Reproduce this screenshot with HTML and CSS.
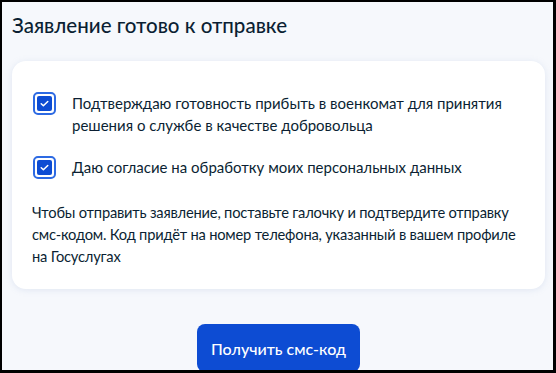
FILE: index.html
```html
<!DOCTYPE html>
<html lang="ru">
<head>
    <meta charset="UTF-8">
    <meta name="viewport" content="width=device-width, initial-scale=1.0">
    <title>Заявление готово к отправке</title>
    <link rel="stylesheet" href="styles.css">
</head>
<body>
    <div class="frame">
        <h2 class="title">Заявление готово к отправке</h2>
        <div class="card">
            <label class="check-row">
                <span class="check-box">
                    <svg viewBox="0 0 16 16" width="16" height="16"><path d="M4.5 8.2l2.3 2.2 4.7-4.6" fill="none" stroke="#fff" stroke-width="1.6" stroke-linecap="round" stroke-linejoin="round"/></svg>
                </span>
                <span class="check-text">Подтверждаю готовность прибыть в военкомат для принятия решения о службе в качестве добровольца</span>
            </label>
            <label class="check-row">
                <span class="check-box">
                    <svg viewBox="0 0 16 16" width="16" height="16"><path d="M4.5 8.2l2.3 2.2 4.7-4.6" fill="none" stroke="#fff" stroke-width="1.6" stroke-linecap="round" stroke-linejoin="round"/></svg>
                </span>
                <span class="check-text">Даю согласие на обработку моих персональных данных</span>
            </label>
            <p class="note">Чтобы отправить заявление, поставьте галочку и подтвердите отправку<br>смс-кодом. Код придёт на номер телефона, указанный в вашем профиле<br>на Госуслугах</p>
        </div>
        <div class="actions">
            <button class="btn-primary">Получить смс-код</button>
        </div>
    </div>
</body>
</html>
```

FILE: styles.css
```css
html, body { margin: 0; padding: 0; }
body { font-family: "Lato", "Open Sans", sans-serif; color: #0b1f33; background: #000; }
.frame { box-sizing: border-box; width: 556px; height: 373px; overflow: hidden; border-style: solid; border-color: #000; border-width: 2px 3px 3px 2px; background: #f6f8fc; padding: 0 8px 0 10px; }
.title { margin: 0; padding-top: 10px; height: 59px; box-sizing: border-box; font-size: 20.5px; line-height: 26px; font-weight: 500; color: #0b1f33; }
.card { background: #fff; border-radius: 14px; padding: 31px 20px 22px 20px; box-shadow: 0 1px 6px rgba(160, 180, 215, 0.25); }
.check-row { display: flex; align-items: flex-start; gap: 16px; margin-bottom: 20px; }
.check-box { flex: none; box-sizing: border-box; width: 23px; height: 23px; margin: 0 0 0 1px; border: 2px solid #2d6ae3; border-radius: 5px; padding: 2px; display: flex; }
.check-box svg { width: 15px; height: 15px; background: #0d4cd3; border-radius: 2px; }
.check-text { font-size: 15px; line-height: 22px; color: #0b1f33; }
.note { margin: 22px -14px 0 0; font-size: 14.7px; line-height: 22px; letter-spacing: -0.2px; white-space: nowrap; color: #0b1f33; }
.actions { display: flex; justify-content: center; padding-top: 35px; }
.btn-primary { font-family: "Lato", sans-serif; background: #0d4cd3; color: #fff; border: none; border-radius: 8px; width: 163px; height: 48px; font-size: 16px; font-weight: 500; }
```
